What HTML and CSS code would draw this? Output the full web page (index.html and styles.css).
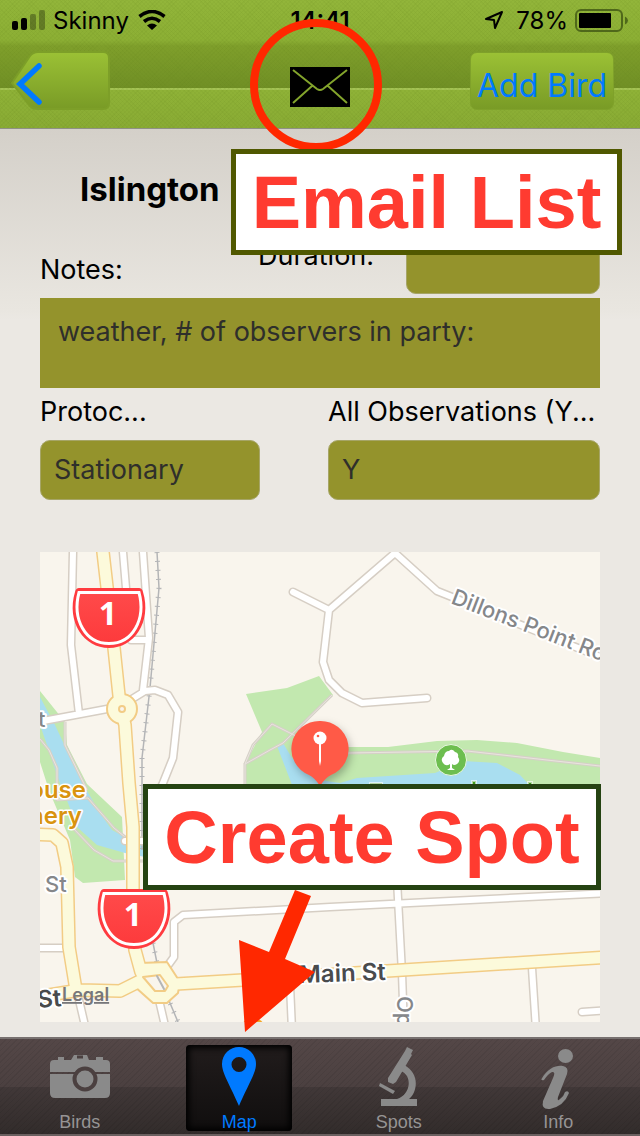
FILE: index.html
```html
<!DOCTYPE html>
<html lang="en">
<head>
<meta charset="utf-8">
<meta name="viewport" content="width=device-width, initial-scale=1">
<title>Islington</title>
<link rel="stylesheet" href="styles.css">
</head>
<body>
<div class="app">
  <header class="header">
    <div class="status">
      <div class="status-side">
        <svg class="signal" viewBox="0 0 34 20" aria-hidden="true"><rect y="11" width="6" height="9" rx="2"/><rect x="9" y="8" width="6" height="12" rx="2"/><rect class="dim" x="18" y="4" width="6" height="16" rx="2"/><rect class="dim" x="27" width="6" height="20" rx="2"/></svg>
        <span>Skinny</span>
        <svg class="wifi" viewBox="0 0 28 20" aria-hidden="true"><path d="M1.500 6.500Q14-3.500 26.500 6.500M6 11.500Q14 5 22 11.500" fill="none" stroke="#000" stroke-width="3.600"/><path d="M9 15.500Q14 11.500 19 15.500L14 20Z"/></svg>
      </div>
      <time class="clock">14:41</time>
      <div class="status-side status-end">
        <svg class="location" viewBox="0 0 20 20" aria-hidden="true"><path d="M2 9L18 2L11 18L10 10Z" fill="none" stroke="#000" stroke-width="2" stroke-linejoin="round"/></svg>
        <span>78%</span>
        <svg class="battery" viewBox="0 0 53 23" aria-hidden="true"><rect x="1" y="1" width="46" height="21" rx="5" fill="none" stroke="#4f681a" stroke-width="2"/><rect x="4" y="4" width="32" height="15" rx="1"/><path d="M50 7.500Q53 9 53 11.500Q53 14 50 15.500Z" fill="#4f681a"/></svg>
      </div>
    </div>
    <nav class="navbar">
      <button class="back" aria-label="Back">
        <svg viewBox="0 0 100 60" aria-hidden="true">
          <defs><linearGradient id="green" x2="0" y2="1"><stop stop-color="#9bc135"/><stop offset="1" stop-color="#799b26"/></linearGradient></defs>
          <path d="M2 32L20 5Q23 1 28 1H93Q99 1 99 7V52Q99 58 93 58H28Q23 58 20 55Z" fill="url(#green)" stroke="#7d9f28" stroke-width="2"/>
          <path d="M29 15L10 33L29 51" fill="none" stroke="#007aff" stroke-width="5.500" stroke-linecap="round"/>
        </svg>
      </button>
      <button class="mail" aria-label="Email list">
        <svg viewBox="0 0 60 40" aria-hidden="true"><path d="M0 0H60V40H0Z"/><path d="M3 3L27 22Q30 24 33 22L57 3M3 36L22 19M57 36L38 19" fill="none" stroke="#83a42c" stroke-width="2"/></svg>
      </button>
      <button class="add">Add Bird</button>
    </nav>
    <div class="ring" aria-hidden="true"></div>
  </header>

  <main class="content">
    <div class="callout callout-email">Email List</div>
    <h1 class="title">Islington</h1>
    <form class="form">
      <div class="row row-top">
        <label class="notes-label" for="notes">Notes:</label>
        <label class="duration-label" for="duration">Duration:</label>
        <input class="field" id="duration" type="text">
      </div>
      <textarea class="notes" id="notes">weather, # of observers in party:</textarea>
      <div class="row row-bottom">
        <div class="group">
          <label class="short" for="protocol">Protoc...</label>
          <input class="field" id="protocol" type="text" value="Stationary">
        </div>
        <div class="group">
          <label for="all">All Observations (Y...</label>
          <input class="field" id="all" type="text" value="Y">
        </div>
      </div>
    </form>

    <section class="map" aria-label="Map">
      <svg class="map-canvas" viewBox="40 552 560 470" preserveAspectRatio="xMidYMin slice">
        <defs>
          <linearGradient id="red" x2="0" y2="1"><stop stop-color="#ff4a4a"/><stop offset="1" stop-color="#fd3a3c"/></linearGradient>
          <g id="shield"><path d="M6 0H66Q69 0 70 4C79 34 61 60 36 60S-7 34 2 4Q3 0 6 0Z" fill="#ff3b40"/><path d="M6 4.500H66C73 31 60 55.500 36 55.500S-1 31 6 4.500Z" fill="url(#red)" stroke="#fff" stroke-width="3"/></g>
          <g id="streets">
            <path d="M73 545V552L71 645L79 714M123 552L127 600M143 545V552L149 638L143 690M131 640H148M43 721L107 709M132 699L145 691L155 690L168 695L178 712L173 758L163 783L155 800"/>
            <path d="M293 592L329 610L395 553L437 591L452 597L620 665M329 610L323 662L329 680L342 693L362 703L427 698"/>
            <path d="M30 948H66M79 1000L86 1030M159 1000L166 1030M166 968L174 957V922L183 915L330 907L610 893M397 880L402 973L404 1030M532 968L536 1030M290 985L292 1030M582 1012L610 1010M125 841H150"/>
          </g>
          <g id="highway"><path d="M103 545V552L114 648L120 705L125 725L129 783L133 827V890L135 950L141 972M30 834L53 835L62 843L67 867L69 947L76 990M30 998L80 990L120 991L142 980M176 984L243 980L387 971L610 957"/></g>
        </defs>
        <rect x="40" y="552" width="560" height="470" fill="#f9f5ed"/>
        <path d="M40 691L65 722L67 745L87 784L122 817L125 880L83 883L75 877L70 840L53 800L47 784L40 762ZM246 694L287 688L319 676L333 695L296 729L348 747H388L437 741L477 740L517 743L563 752L600 758V800H245V764L262 732Z" fill="#c2e8af"/>
        <path d="M40 697L55 725L63 742L83 784L100 813L112 830L125 837L150 844V858L125 853L97 845L77 827L68 803L58 778L47 745L40 725ZM277 746L283 743L292 758L320 780L340 783L357 778L435 773L463 761L497 763L520 775L534 790H294Z" fill="#a9def0"/>
        <g fill="none" stroke="#d5d0c7" stroke-width="3"><path d="M332 695L283 743L270 750L245 764V790M300 738L272 724L253 745L245 764M348 753L467 751L600 766M65 722V745L87 790M40 739L49 750L57 768V800L88 798L114 828L130 841M73 828L94 850L113 861H145"/></g>
        <g fill="none" stroke="#e9e5de" stroke-width="1"><path d="M332 695L283 743L270 750L245 764V790M300 738L272 724L253 745L245 764M348 753L467 751L600 766M65 722V745L87 790M40 739L49 750L57 768V800L88 798L114 828L130 841M73 828L94 850L113 861H145"/></g>
        <g fill="none" stroke="#b4b5b7"><path d="M157 552L159 588L150 688L142 758V850M153 943L157 963L170 1003L178 1022" stroke-width="1.500"/><path d="M157 552L159 588L150 688L142 758V850M153 943L157 963L170 1003L178 1022" stroke-width="5" stroke-dasharray="1 8"/></g>
        <g fill="none" stroke-linejoin="round" stroke-linecap="round">
          <use href="#streets" stroke="#d6cec4" stroke-width="9"/>
          <use href="#streets" stroke="#fff" stroke-width="6"/>
          <use href="#highway" stroke="#f2cc85" stroke-width="14"/>
          <circle cx="122" cy="709" r="15" fill="#fcfadb" stroke="#f2cc85" stroke-width="2"/>
          <path d="M140 963L167 962L180 982L178 993L167 1003H153L134 986Z" fill="#fcfadb" stroke="#f2cc85" stroke-width="2"/>
          <use href="#highway" stroke="#fcfadb" stroke-width="11"/>
          <circle cx="122" cy="709" r="3" fill="#f9f5ed" stroke="#f2cc85" stroke-width="2"/>
          <path d="M143 977L160 975L168 986L165 991H155Z" fill="#f9f5ed" stroke="#f2cc85" stroke-width="2"/>
          <path d="M157 976L164 989" stroke="#b4b5b7" stroke-width="2"/>
        </g>
        <use href="#shield" x="73" y="588"/>
        <use href="#shield" x="98" y="889"/>
        <g class="shield-number"><text x="108" y="625">1</text><text x="133" y="926">1</text></g>
        <g class="street-label">
          <text transform="translate(450 603) rotate(21)">Dillons Point Road</text>
          <text x="38" y="727">t</text><text x="45" y="892">St</text>
          <text transform="translate(397 996) rotate(90)">Op</text>
        </g>
        <g class="main-label"><text transform="translate(299 983) rotate(-2)">Main St</text><text transform="translate(38 1008) rotate(-5)">St</text></g>
        <g class="place-label"><text x="86" y="798">ouse</text><text x="82" y="824">nery</text></g>
        <text class="legal" x="62" y="1001">Legal</text>
        <circle cx="253" cy="1031" r="13" fill="#f5a623"/>
        <g fill="#3f9b1a" stroke="#fff" stroke-opacity=".6" stroke-width="2"><path d="M370 783H382V790H370ZM472 781H476V785H472ZM528 782H532V786H528Z"/></g>
        <circle cx="451" cy="760" r="15.500" fill="#6dbe4f" stroke="#e9f7e2"/>
        <path d="M450 768V764Q446 767 443 763Q440 759 444 756Q445 751 449 751Q452 748 455 752Q459 753 458 757Q461 761 457 764Q454 766 452 764V768L455 770H447Z" fill="#fff"/>
        <g class="pin"><path d="M320 721A28 28 0 0 1 331 775Q325 778 320 786Q315 778 309 775A28 28 0 0 1 320 721Z" fill="#ff5a47"/><circle cx="320" cy="738" r="6.500" fill="#fff"/><path d="M319 744H321V761L320 766L319 761Z" fill="#fff"/><circle cx="318" cy="736" r="1.300" fill="#ff5a47"/></g>
      </svg>
      <div class="callout callout-spot">Create Spot</div>
      <svg class="arrow" viewBox="0 0 76 142" aria-hidden="true"><path d="M56 0L72 6L46 69L76 82L6 142L0 50L30 62Z" fill="#ff2800"/></svg>
    </section>
  </main>

  <nav class="tabs">
    <a class="tab" href="#birds">
      <svg viewBox="0 0 60 60" aria-hidden="true"><path d="M4 15Q0 15 0 19V27H60V19Q60 15 56 15H53V12H46V15H39L37 10H24L21 15H14V12H8V15ZM0 29V48Q0 53 5 53H55Q60 53 60 48V29Z" fill="#8a8a8a"/><path d="M27 12H33" stroke="#4b4040" stroke-width="3"/><circle cx="35" cy="34" r="10.500" fill="#8a8a8a" stroke="#4b4040" stroke-width="4"/></svg>
      <span>Birds</span>
    </a>
    <a class="tab tab-active" href="#map">
      <svg viewBox="0 0 60 60" aria-hidden="true"><path fill-rule="evenodd" d="M30 2C39 2 47 9 47 19C47 28 40 38 30 61C20 38 13 28 13 19C13 9 21 2 30 2ZM30 12A7.500 7.500 0 1 0 30 27A7.500 7.500 0 1 0 30 12Z" fill="#007aff"/></svg>
      <span>Map</span>
    </a>
    <a class="tab" href="#spots">
      <svg viewBox="0 0 60 60" aria-hidden="true"><g fill="#8a8a8a"><path d="M12 54H28C43 49 43 30 32 26L35 20C52 29 48 48 40 54H48V61H12Z"/><path d="M38 2L44 5L42 9L43 10L27 37L24 39L19 37V33L36 6Z"/><path d="M11 38L26 46L24 49L10 41Z"/></g></svg>
      <span>Spots</span>
    </a>
    <a class="tab" href="#info">
      <svg viewBox="0 0 60 60" aria-hidden="true"><g fill="#8a8a8a"><ellipse cx="37.500" cy="11" rx="7.500" ry="7"/><path d="M13.500 34C20 23 28 20 35 21Q41 22 39 29L30 52Q29 57 32 54Q36 51 37 47Q40 45 41 48Q36 61 22 64Q13 65 15 56L25 33Q28 26 24 27Q20 29 16 35Q13 36 13.500 34Z"/></g></svg>
      <span>Info</span>
    </a>
  </nav>
</div>
</body>
</html>
```
FILE: styles.css
```css
* { box-sizing: border-box; }

body {
  margin: 0;
  font-family: Inter, "Liberation Sans", sans-serif;
  color: #000;
}

button, input, textarea { font: inherit; }
button { border: 0; padding: 0; background: none; }
svg { display: block; }

.app {
  display: flex;
  flex-direction: column;
  min-height: 100vh;
  background: linear-gradient(#d4d0c9 128px, #e9e6e0 310px, #ebe8e3 320px);
}

.header {
  position: relative;
  z-index: 1;
  height: 129px;
  border-bottom: 1px solid #8f9185;
  background:
    repeating-linear-gradient(45deg, #5f7f1814 0 1px, transparent 1px 3px),
    repeating-linear-gradient(-45deg, #5f7f1814 0 1px, transparent 1px 3px),
    linear-gradient(#92b53a, #8caf34 40px, #7f9f2b 46px, #708f25 88px, #a4c354 88px, #a4c354 90px, #8fb237 90px, #89ab34);
}

.status {
  display: grid;
  grid-template-columns: 1fr auto 1fr;
  align-items: center;
  height: 40px;
  padding: 0 12px;
  font-size: 24px;
}

.status-side { display: flex; align-items: center; gap: 7px; }
.status-end { justify-content: flex-end; }
.clock { font-weight: 600; }
.signal { width: 34px; height: 20px; }
.dim { opacity: .3; }
.wifi { width: 28px; height: 20px; margin-left: 2px; }
.location { width: 20px; height: 20px; margin-right: 5px; }
.battery { width: 53px; height: 23px; }

.navbar {
  display: grid;
  grid-template-columns: 1fr auto 1fr;
  align-items: center;
  padding: 11px 10px 0;
}

.back { width: 100px; height: 60px; }
.mail { width: 60px; height: 40px; margin-top: 12px; }
.mail svg { width: 60px; }

.add {
  justify-self: end;
  width: 144px;
  height: 58px;
  margin-right: 16px;
  border: 1px solid #7fa12a;
  border-radius: 7px;
  background: linear-gradient(#9bc135, #799b26);
  color: #007aff;
  font-size: 32px;
  line-height: 56px;
  padding-top: 5px;
}

.ring {
  position: absolute;
  top: 19px;
  left: calc(50% - 70px);
  width: 132px;
  height: 132px;
  border: 8px solid #ff2800;
  border-radius: 50%;
}

.content {
  position: relative;
  flex: 1;
  display: flex;
  flex-direction: column;
  padding: 36px 40px 15px;
}

.callout {
  position: absolute;
  z-index: 2;
  height: 106px;
  border: 5px solid #254312;
  background: #fff;
  color: #ff3b30;
  font: bold 74px/98px "Liberation Sans", Arial, sans-serif;
  text-align: center;
  white-space: nowrap;
}

.callout-email {
  top: 20px;
  left: 231px;
  right: 18px;
  border-color: #505800;
}

.callout-spot { top: 232px; left: 103px; right: -1px; }

.arrow {
  position: absolute;
  z-index: 3;
  top: 338px;
  left: 199px;
  width: 76px;
}

.title {
  margin: 0;
  padding-left: 40px;
  font-size: 33px;
  line-height: 48px;
}

.form { padding-top: 21px; font-size: 27px; }
.row { display: grid; }
.row-top { grid-template-columns: 218px 148px 1fr; height: 60px; }
.notes-label { align-self: end; line-height: 48px; }
.duration-label { line-height: 44px; }

.field {
  width: 100%;
  height: 60px;
  border: 1px solid #a6a567;
  border-radius: 10px;
  padding: 0 13px 2px;
  background: #94932c;
  color: #2f2f2b;
}

.notes {
  display: block;
  width: 100%;
  height: 90px;
  margin-top: 4px;
  border: 0;
  padding: 14px 18px;
  background: #94932c;
  color: #2f2f2b;
  line-height: 40px;
  resize: none;
}

.row-bottom { grid-template-columns: 220fr 272fr; gap: 68px; }
.group { min-width: 0; }
.group label { display: block; line-height: 48px; padding-bottom: 4px; white-space: nowrap; }

.map {
  position: relative;
  flex: 1;
  display: flex;
  min-height: 470px;
  margin-top: 52px;
}

.map-canvas { width: 100%; height: 470px; }
.map-canvas text { paint-order: stroke; stroke-linejoin: round; }
.shield-number { fill: #fff; font-family: "Open Sans", sans-serif; font-size: 32px; font-weight: 700; text-anchor: middle; }
.street-label { fill: #85878a; font-size: 22px; font-weight: 500; stroke: #fff; stroke-width: 4px; }
.main-label { fill: #494b4d; font-size: 24px; font-weight: 600; stroke: #fff; stroke-width: 4px; }
.place-label { fill: #d9940f; font-size: 24px; font-weight: 600; stroke: #fff; stroke-width: 3px; text-anchor: end; }
.legal { fill: #77777a; font-size: 18px; font-weight: 600; text-decoration: underline; }
.pin { filter: drop-shadow(2px 4px 4px #0004); }

.tabs {
  display: grid;
  grid-template-columns: repeat(4, 1fr);
  justify-items: center;
  height: 99px;
  padding: 6px 2px 4px 0;
  border-top: 2px solid #77706f;
  border-bottom: 2px solid #6a6060;
  background:
    repeating-linear-gradient(135deg, #00000010 0 1px, transparent 1px 4px),
    linear-gradient(#544747, #4b4040 48px, #413838 48px, #322c2b);
}

.tab {
  display: flex;
  flex-direction: column;
  align-items: center;
  width: 106px;
  height: 86px;
  border-radius: 4px;
  color: #969494;
  font: 18px/20px "Liberation Sans", Arial, sans-serif;
  text-decoration: none;
}

.tab svg { width: 60px; height: 60px; overflow: visible; margin-bottom: 7px; }

.tab-active {
  background: linear-gradient(#211c1c, #100e0e);
  box-shadow: inset 0 0 6px 3px #000;
  color: #007aff;
}
```
